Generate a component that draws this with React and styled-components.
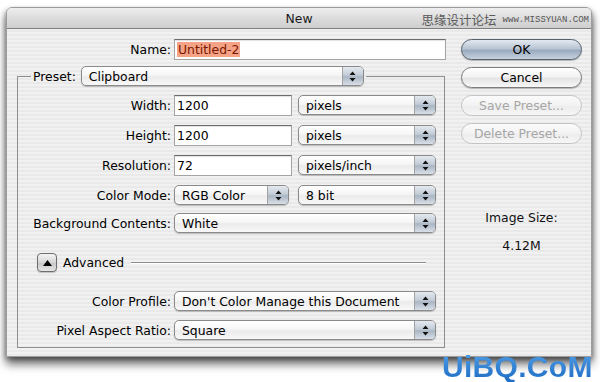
import React from 'react'
import styled, { createGlobalStyle } from 'styled-components';

const GlobalStyle = createGlobalStyle`
    body {
        margin: 0;
        background: #fff;
        font-family: "DejaVu Sans", "Noto Sans", sans-serif;
        font-size: 12.4px;
        color: #000;
    }
`

// small up/down arrows of the aqua popup
const Arrows = () => (
    <svg width="7" height="11" viewBox="0 0 7 11">
        <path d="M3.5 0.5 L6.5 4 L0.5 4 Z" fill="#111" />
        <path d="M3.5 10.5 L6.5 7 L0.5 7 Z" fill="#111" />
    </svg>
)

const Select = ({ children, width }) => (
    <SelectBox $w={width}>
        <SelectText>{children}</SelectText>
        <Cap><Arrows /></Cap>
    </SelectBox>
)

const App = () => {
    return (
        <>
            <GlobalStyle />
            <Page>
                <Window>
                    <TitleBar>
                        <Title>New</Title>
                        <TopMark>
                            <span>思缘设计论坛</span>
                            <Site>www.MISSYUAN.COM</Site>
                        </TopMark>
                    </TitleBar>
                    <Body>
                        <Form>
                            <NameRow>
                                <Label>Name:</Label>
                                <TextField><Selected>Untitled-2</Selected></TextField>
                            </NameRow>
                            <Group>
                                <Legend>
                                    <span>Preset:</span>
                                    <Select width={283}>Clipboard</Select>
                                </Legend>
                                <Row $top={9}>
                                    <Label>Width:</Label>
                                    <Fields>
                                        <TextField $w={118}>1200</TextField>
                                        <Select width={138}>pixels</Select>
                                    </Fields>
                                </Row>
                                <Row $top={9}>
                                    <Label>Height:</Label>
                                    <Fields>
                                        <TextField $w={118}>1200</TextField>
                                        <Select width={138}>pixels</Select>
                                    </Fields>
                                </Row>
                                <Row $top={9}>
                                    <Label>Resolution:</Label>
                                    <Fields>
                                        <TextField $w={118}>72</TextField>
                                        <Select width={138}>pixels/inch</Select>
                                    </Fields>
                                </Row>
                                <Row $top={9}>
                                    <Label>Color Mode:</Label>
                                    <Fields>
                                        <Select width={115}>RGB Color</Select>
                                        <Select width={138}>8 bit</Select>
                                    </Fields>
                                </Row>
                                <Row $top={8}>
                                    <Label>Background Contents:</Label>
                                    <Select>White</Select>
                                </Row>
                                <Advanced>
                                    <Disclosure>
                                        <svg width="9" height="6" viewBox="0 0 9 6">
                                            <path d="M4.5 0 L9 6 L0 6 Z" fill="#000" />
                                        </svg>
                                    </Disclosure>
                                    <span>Advanced</span>
                                    <Rule />
                                </Advanced>
                                <Row $top={19}>
                                    <Label>Color Profile:</Label>
                                    <Select>Don't Color Manage this Document</Select>
                                </Row>
                                <Row $top={9}>
                                    <Label>Pixel Aspect Ratio:</Label>
                                    <Select>Square</Select>
                                </Row>
                            </Group>
                        </Form>
                        <Side>
                            <Button $kind="default">OK</Button>
                            <Button>Cancel</Button>
                            <Button disabled>Save Preset...</Button>
                            <Button disabled>Delete Preset...</Button>
                            <SizeLabel>Image Size:</SizeLabel>
                            <SizeValue>4.12M</SizeValue>
                        </Side>
                    </Body>
                </Window>
                <BigMark>UiBQ.CoM</BigMark>
            </Page>
        </>
    )
};

export default App;

const Page = styled.div`
    position: relative;
    width: 600px;
    height: 382px;
    padding: 7px 0 0 6px;
    box-sizing: border-box;
    overflow: hidden;
`

const Window = styled.div`
    width: 586px;
    box-sizing: border-box;
    border: 1px solid #9c9c9c;
    border-radius: 6px 6px 0 0;
    background: repeating-linear-gradient(to bottom, #f1f1f1 0 2px, #e9e9e9 2px 4px);
    box-shadow: 0 7px 10px rgba(0, 0, 0, 0.6), -2px 2px 4px rgba(0, 0, 0, 0.18), 2px 2px 4px rgba(0, 0, 0, 0.18);
`

const TitleBar = styled.div`
    position: relative;
    height: 20px;
    display: flex;
    align-items: center;
    justify-content: center;
    border-radius: 5px 5px 0 0;
    border-bottom: 1px solid #7e7e7e;
    background: linear-gradient(to bottom, #eeeeee, #d9d9d9 60%, #cfcfcf);
`

const Title = styled.div`
    font-size: 12.4px;
    color: #1a1a1a;
`

const TopMark = styled.div`
    position: absolute;
    right: 2px;
    top: 2px;
    display: flex;
    align-items: center;
    gap: 6px;
    font-family: "Noto Sans CJK SC", sans-serif;
    font-size: 12.5px;
    color: #5a5a5a;
`

const Site = styled.span`
    font-family: "Liberation Mono", monospace;
    font-size: 9px;
    color: #555;
`

const Body = styled.div`
    display: flex;
    padding: 10px 0 8px 0;
`

const Form = styled.div`
    width: 439px;
`

const NameRow = styled.div`
    display: grid;
    grid-template-columns: 164px 272px;
    column-gap: 3px;
    align-items: center;
`

const Label = styled.div`
    text-align: right;
    white-space: nowrap;
`

const TextField = styled.div`
    width: ${p => p.$w ? `${p.$w}px` : 'auto'};
    height: 21px;
    box-sizing: border-box;
    display: flex;
    align-items: center;
    padding-left: 2px;
    background: #fff;
    border: 1px solid #a4a4a4;
    border-top-color: #6c6c6c;
    box-shadow: inset 0 1px 1px rgba(0, 0, 0, 0.12);
    white-space: nowrap;
`

const Selected = styled.span`
    background: #f5a386;
    color: #7a1600;
    padding: 0 1px;
    line-height: 15px;
`

const Group = styled.fieldset`
    margin: 6px 0 0 10px;
    width: 428px;
    box-sizing: border-box;
    padding: 0 0 7px 0;
    border: 1px solid #8e8e8e;
    min-inline-size: 0;
`

const Legend = styled.legend`
    display: flex;
    align-items: center;
    gap: 5px;
    margin-left: 13px;
    padding: 0 2px;
`

const Row = styled.div`
    display: grid;
    grid-template-columns: 153px 262px;
    column-gap: 3px;
    align-items: center;
    margin-top: ${p => p.$top}px;
`

const Fields = styled.div`
    display: flex;
    justify-content: space-between;
`

const SelectBox = styled.div`
    width: ${p => p.$w ? `${p.$w}px` : 'auto'};
    height: 20px;
    box-sizing: border-box;
    display: flex;
    border: 1px solid #8a8a8a;
    border-radius: 5px;
    overflow: hidden;
    background: linear-gradient(to bottom, #ffffff, #f6f6f6 45%, #ebebeb 55%, #f8f8f8);
    box-shadow: 0 1px 1px rgba(0, 0, 0, 0.22);
`

const SelectText = styled.div`
    flex: 1;
    display: flex;
    align-items: center;
    padding-left: 7px;
    white-space: nowrap;
    overflow: hidden;
`

const Cap = styled.div`
    width: 20px;
    display: flex;
    align-items: center;
    justify-content: center;
    border-left: 1px solid #a2a2a2;
    background: linear-gradient(to bottom, #e4e9ef, #c3ccd7 45%, #aab6c4 55%, #d8dfe7);
`

const Advanced = styled.div`
    display: flex;
    align-items: center;
    margin: 20px 18px 0 19px;
`

const Disclosure = styled.div`
    width: 20px;
    height: 19px;
    box-sizing: border-box;
    display: flex;
    align-items: center;
    justify-content: center;
    margin-right: 6px;
    border: 1px solid #6e6e6e;
    border-radius: 4px;
    background: linear-gradient(to bottom, #f4f4f4, #d6d6d6 50%, #c6c6c6 51%, #e6e6e6);
    box-shadow: 0 1px 1px rgba(0, 0, 0, 0.2);
`

const Rule = styled.div`
    flex: 1;
    height: 1px;
    margin-left: 7px;
    background: #8e8e8e;
    box-shadow: 0 1px 0 #fff;
`

const Side = styled.div`
    width: 121px;
    margin-left: 15px;
    display: flex;
    flex-direction: column;
    align-items: center;
    gap: 7px;
`

const Button = styled.div`
    width: 121px;
    height: 21px;
    box-sizing: border-box;
    display: flex;
    align-items: center;
    justify-content: center;
    border-radius: 11px;
    border: 1px solid ${p => p.disabled ? '#c4c4c4' : p.$kind === 'default' ? '#55606d' : '#7c7c7c'};
    color: ${p => p.disabled ? '#a6a6a6' : '#000'};
    background: ${p => p.$kind === 'default'
        ? 'linear-gradient(to bottom, #e3e9f0, #b9c5d3 45%, #9aabbf 55%, #c6d2de)'
        : p.disabled
            ? 'linear-gradient(to bottom, #fbfbfb, #f2f2f2 50%, #ececec 51%, #f6f6f6)'
            : 'linear-gradient(to bottom, #ffffff, #f3f3f3 45%, #e4e4e4 55%, #f7f7f7)'};
    box-shadow: ${p => p.disabled ? 'none' : '0 1px 1px rgba(0, 0, 0, 0.25)'};
`

const SizeLabel = styled.div`
    margin-top: 59px;
    color: #111;
`

const SizeValue = styled.div`
    margin-top: 6px;
    color: #111;
`

const BigMark = styled.div`
    position: absolute;
    left: 442px;
    top: 352px;
    font-family: "Liberation Sans", Arial, sans-serif;
    font-weight: bold;
    font-size: 30px;
    line-height: 30px;
    letter-spacing: 0.3px;
    background: linear-gradient(to bottom, #4d9de6, #1f6cc4);
    -webkit-background-clip: text;
    background-clip: text;
    color: transparent;
`
